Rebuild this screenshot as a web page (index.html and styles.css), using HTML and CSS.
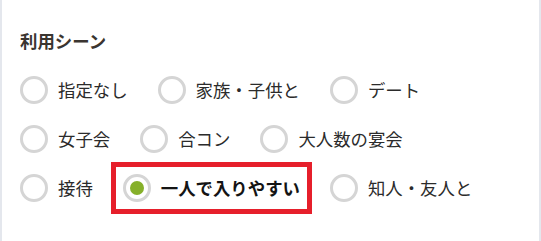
FILE: index.html
```html
<!DOCTYPE html>
<html lang="ja">
<head>
<meta charset="utf-8">
<title>利用シーン</title>
<link rel="stylesheet" href="styles.css">
</head>
<body>
<section class="card">
  <h2 class="title">利用シーン</h2>
  <div class="options">
    <label class="option"><input type="radio" name="scene" class="radio"><span class="text">指定なし</span></label>
    <label class="option"><input type="radio" name="scene" class="radio"><span class="text">家族・子供と</span></label>
    <label class="option"><input type="radio" name="scene" class="radio"><span class="text">デート</span></label>
    <label class="option"><input type="radio" name="scene" class="radio"><span class="text">女子会</span></label>
    <label class="option"><input type="radio" name="scene" class="radio"><span class="text">合コン</span></label>
    <label class="option"><input type="radio" name="scene" class="radio"><span class="text">大人数の宴会</span></label>
    <label class="option"><input type="radio" name="scene" class="radio"><span class="text">接待</span></label>
    <label class="option is-selected"><input type="radio" name="scene" class="radio" checked><span class="text">一人で入りやすい</span></label>
    <label class="option"><input type="radio" name="scene" class="radio"><span class="text">知人・友人と</span></label>
  </div>
</section>
</body>
</html>
```

FILE: styles.css
```css
html, body {
  margin: 0;
  padding: 0;
  background: #ffffff;
}

body {
  font-family: "Noto Sans CJK JP", "Noto Sans", sans-serif;
  color: #2b2b2b;
}

.card {
  box-sizing: border-box;
  width: 541px;
  height: 241px;
  border-left: 2px solid #e4e7ed;
  border-right: 2px solid #e4e7ed;
  padding: 29px 0 0 18px;
}

.title {
  margin: 0;
  font-size: 17.4px;
  line-height: 24px;
  font-weight: 700;
  color: #3a3530;
}

.options {
  margin-top: 23px;
  max-width: 470px;
  display: flex;
  flex-wrap: wrap;
  column-gap: 30px;
  row-gap: 21px;
}

.option {
  display: flex;
  align-items: center;
  gap: 10px;
  height: 28px;
  font-size: 17.4px;
  line-height: 24px;
  color: #2b2b2b;
  cursor: pointer;
}

.radio {
  appearance: none;
  -webkit-appearance: none;
  box-sizing: border-box;
  margin: 0;
  width: 28px;
  height: 28px;
  border: 3px solid #d5d5d5;
  border-radius: 50%;
  background: #ffffff;
  display: grid;
  place-items: center;
  flex: none;
}

.radio:checked::after {
  content: "";
  width: 14px;
  height: 14px;
  border-radius: 50%;
  background: #86b02a;
}

.is-selected {
  outline: 5px solid #e61f2b;
  outline-offset: 7px;
}

.is-selected .text {
  font-weight: 700;
  color: #141414;
}
```
